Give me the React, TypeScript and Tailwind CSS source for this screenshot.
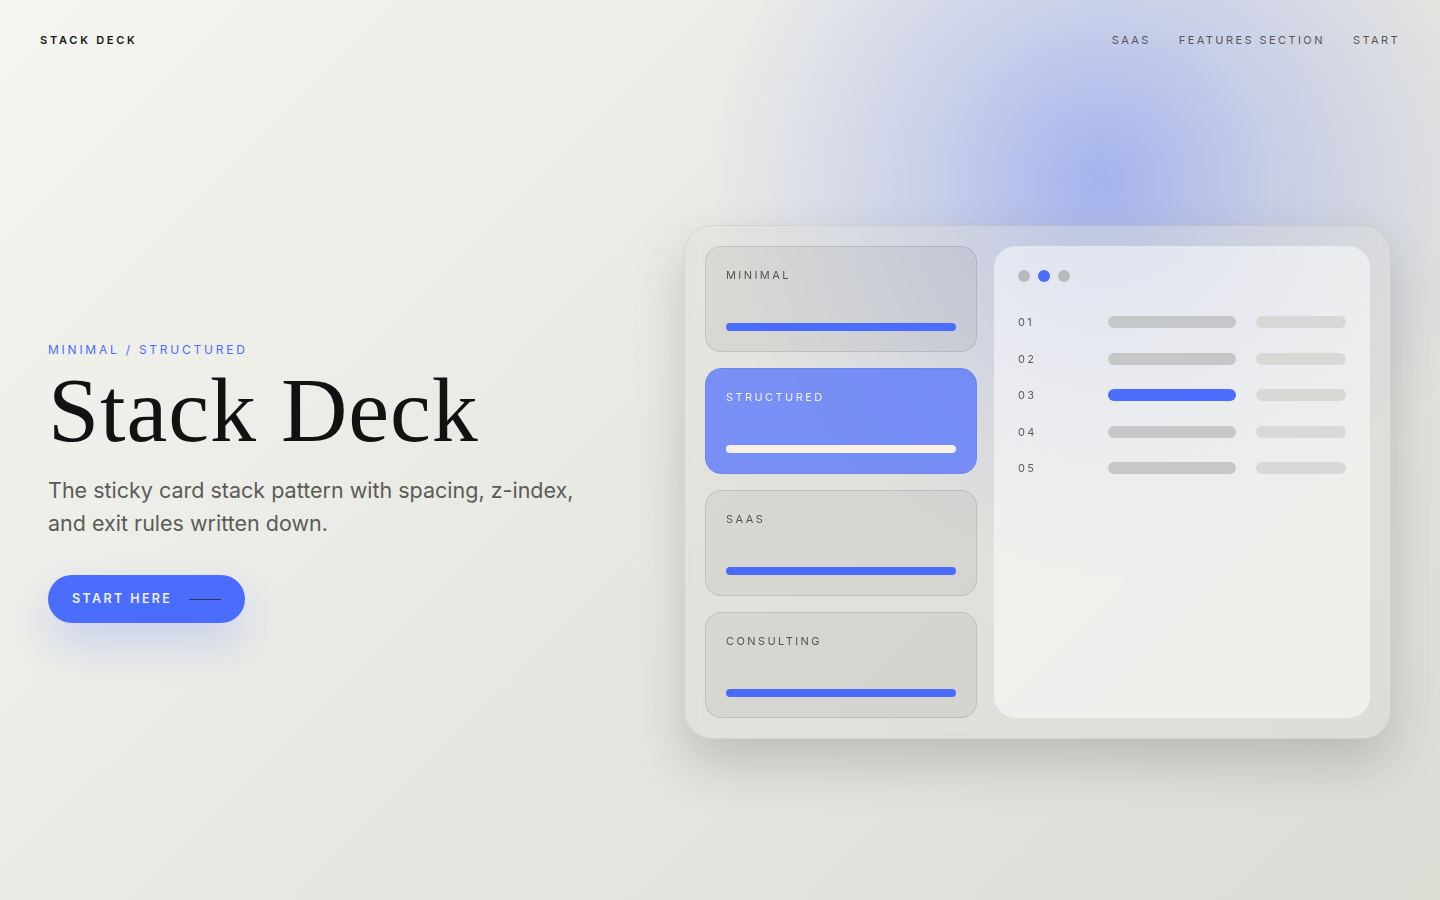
const stackCards = [
  { label: 'MINIMAL', active: false },
  { label: 'STRUCTURED', active: true },
  { label: 'SAAS', active: false },
  { label: 'CONSULTING', active: false },
]

const rows = ['01', '02', '03', '04', '05']

const sans = { fontFamily: 'Inter, "Noto Sans", "Liberation Sans", sans-serif' }

function StackCard({ label, active }: { label: string; active: boolean }) {
  return (
    <div
      className={
        active
          ? 'flex h-[106px] flex-col justify-between rounded-2xl border border-[#6f85ee] bg-[#4a6cff]/70 px-5 pb-[20px] pt-[22px]'
          : 'flex h-[106px] flex-col justify-between rounded-2xl border border-black/10 bg-black/[0.05] px-5 pb-[20px] pt-[22px]'
      }
    >
      <p className={active ? 'text-[11px] leading-3 tracking-[0.22em] text-[#eef0ff]' : 'text-[11px] leading-3 tracking-[0.22em] text-[#555550]'}>
        {label}
      </p>
      <div className={active ? 'h-2 rounded-full bg-[#f6f1ea]' : 'h-2 rounded-full bg-[#4a6cff]'} />
    </div>
  )
}

export default function App() {
  return (
    <div
      className="relative flex h-[900px] flex-col overflow-hidden bg-[linear-gradient(135deg,#f4f5f0_0%,#e8e8e3_50%,#dcdcd5_100%)] text-[#141414]"
      style={sans}
    >
      <div className="pointer-events-none absolute left-[700px] top-[-220px] h-[800px] w-[800px] rounded-full bg-[radial-gradient(circle,rgba(74,108,255,0.42)_0%,rgba(74,108,255,0.2)_30%,rgba(74,108,255,0.07)_55%,transparent_70%)]" />

      <header className="relative flex h-20 items-center justify-between pl-10 pr-[40px]">
        <p className="text-[11px] font-semibold tracking-[0.25em] text-[#161616]">STACK DECK</p>
        <nav className="flex gap-[28px] text-[11px] tracking-[0.22em] text-[#55555a]">
          <span>SAAS</span>
          <span>FEATURES SECTION</span>
          <span>START</span>
        </nav>
      </header>

      <main className="relative flex flex-1 items-center justify-between pb-[16px] pl-12 pr-[49px]">
        <section className="w-[580px]">
          <p className="text-[12px] tracking-[0.23em] text-[#4a6cff]">MINIMAL / STRUCTURED</p>
          <h1
            className="mt-[5px] text-[92px] leading-[1] tracking-[0.01em] text-[#121212]"
            style={{ fontFamily: '"Liberation Serif", "DejaVu Serif", serif' }}
          >
            Stack Deck
          </h1>
          <p className="mt-[18px] max-w-[545px] text-[21.5px] leading-[33px] text-[#5b5b57]">
            The sticky card stack pattern with spacing, z-index, and exit rules written down.
          </p>
          <button
            className="mt-[35px] inline-flex h-12 items-center gap-[17px] rounded-full bg-[#4a6cff] pl-6 pr-6 text-[12.5px] font-semibold tracking-[0.19em] text-[#eef0ff] shadow-[0_20px_44px_rgba(74,108,255,0.22)]"
            type="button"
          >
            START HERE
            <span className="h-px w-8 bg-[#35374f]" />
          </button>
        </section>

        <section className="grid h-[514px] w-[707px] grid-cols-[272px_1fr] gap-[17px] rounded-[28px] border border-black/[0.06] bg-[#dcddd7]/40 p-5 shadow-[0_24px_50px_rgba(60,60,50,0.22)] backdrop-blur-sm">
          <div className="flex flex-col gap-4">
            {stackCards.map((card) => (
              <StackCard active={card.active} key={card.label} label={card.label} />
            ))}
          </div>

          <div className="rounded-[22px] bg-white/50 p-6">
            <div className="flex gap-2">
              <span className="h-3 w-3 rounded-full bg-[#b8b9bd]" />
              <span className="h-3 w-3 rounded-full bg-[#4a6cff]" />
              <span className="h-3 w-3 rounded-full bg-[#b8b9bd]" />
            </div>
            <div className="mt-[34px] flex flex-col gap-[24.5px]">
              {rows.map((row) => (
                <div className="grid h-3 grid-cols-[70px_128px_90px] items-center gap-x-5" key={row}>
                  <span className="text-[11px] leading-3 tracking-[0.2em] text-[#5a5a5a]">{row}</span>
                  <span className={row === '03' ? 'h-3 rounded-full bg-[#4a6cff]' : 'h-3 rounded-full bg-[#c6c7c8]'} />
                  <span className="h-3 rounded-full bg-[#d8d8d6]" />
                </div>
              ))}
            </div>
          </div>
        </section>
      </main>
    </div>
  )
}
